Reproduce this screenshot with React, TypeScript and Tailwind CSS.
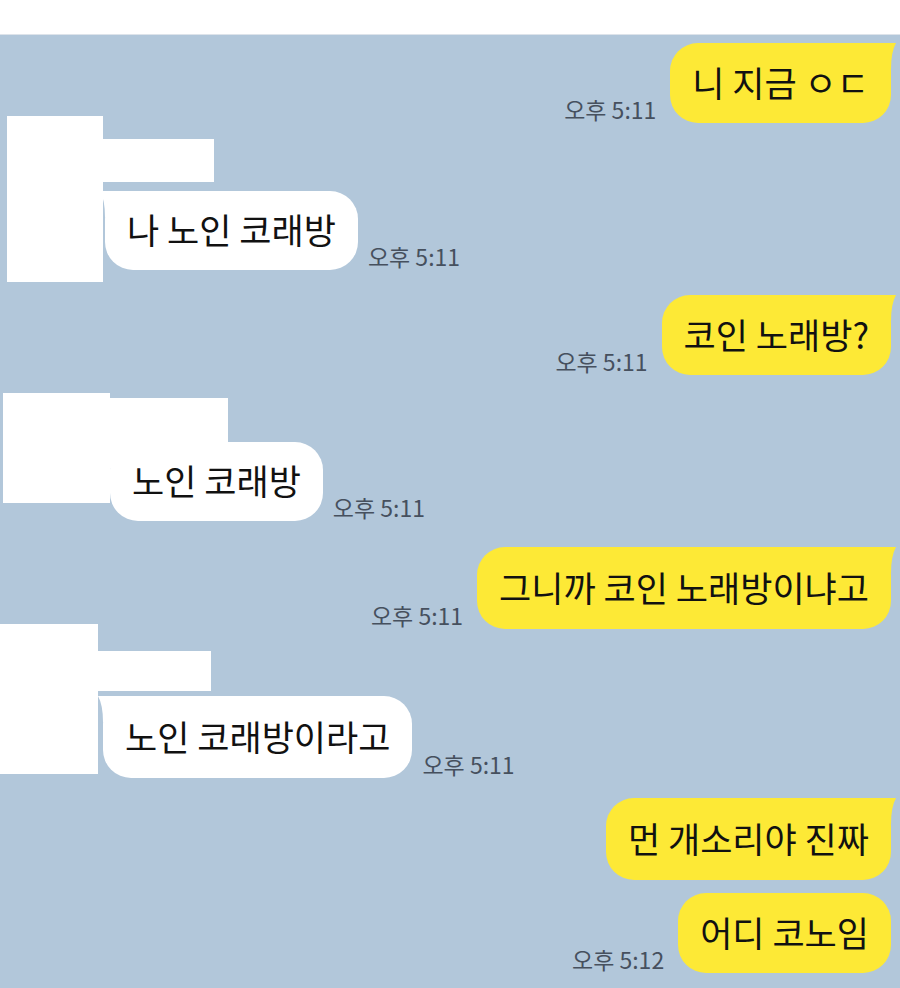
import React from "react";

const YellowTail = () => (
  <svg
    className="absolute -right-[5px] top-0"
    width="34"
    height="26"
    viewBox="0 0 34 26"
  >
    <path d="M34 0 L0 0 L0 26 L29 26 Q29 9 34 0 Z" fill="#fde936" />
  </svg>
);

const WhiteTail = () => (
  <svg
    className="absolute -left-[5px] top-0"
    width="34"
    height="26"
    viewBox="0 0 34 26"
  >
    <path d="M0 0 L34 0 L34 26 L5 26 Q5 9 0 0 Z" fill="#ffffff" />
  </svg>
);

const Time = ({ value, className }: { value: string; className: string }) => (
  <span className={`text-[23px] leading-[26px] text-[#46505e] whitespace-nowrap ${className}`}>
    {value}
  </span>
);

const MyBubble: React.FC<{
  text: string;
  time?: string;
  tail?: boolean;
  className: string;
  height: string;
}> = ({ text, time, tail = true, className, height }) => (
  <div className={`flex items-end justify-end pr-[9px] ${className}`}>
    {time && <Time value={time} className="mr-[14px] mb-[1px]" />}
    <div
      className={`relative flex items-center rounded-[28px] bg-[#fde936] px-[22px] pb-[2px] text-[35px] text-[#111111] whitespace-nowrap ${height}`}
    >
      {tail && <YellowTail />}
      <span className="relative">{text}</span>
    </div>
  </div>
);

const TheirBubble: React.FC<{ text: string; time: string; height: string }> = ({
  text,
  time,
  height,
}) => (
  <div className="flex items-end">
    <div
      className={`relative flex items-center rounded-[28px] bg-white px-[22px] pb-[2px] text-[35px] text-[#111111] whitespace-nowrap ${height}`}
    >
      <WhiteTail />
      <span className="relative">{text}</span>
    </div>
    <Time value={time} className="ml-[10px] mb-[1px]" />
  </div>
);

const App: React.FC = () => {
  return (
    <div className="w-[900px] h-[988px] overflow-hidden bg-white font-['Noto_Sans_CJK_KR',sans-serif]">
      <div className="h-[35px] border-b border-[#dde3ea] bg-white" />
      <div className="flex h-[953px] flex-col bg-[#b2c7da]">
        <MyBubble text="니 지금 ㅇㄷ" time="오후 5:11" className="mt-[8px]" height="h-[80px]" />

        <div className="-mt-[7px] flex items-start">
          <div className="ml-[7px] h-[166px] w-[96px] bg-white" />
          <div className="flex flex-col pt-[23px]">
            <div className="h-[43px] w-[111px] bg-white" />
            <div className="mt-[9px] ml-[2px]">
              <TheirBubble text="나 노인 코래방" time="오후 5:11" height="h-[79px]" />
            </div>
          </div>
        </div>

        <MyBubble text="코인 노래방?" time="오후 5:11" className="mt-[13px]" height="h-[80px]" />

        <div className="mt-[18px] flex items-start">
          <div className="ml-[3px] h-[110px] w-[107px] bg-white" />
          <div className="flex flex-col pt-[5px]">
            <div className="h-[44px] w-[118px] bg-white" />
            <div>
              <TheirBubble text="노인 코래방" time="오후 5:11" height="h-[79px]" />
            </div>
          </div>
        </div>

        <MyBubble
          text="그니까 코인 노래방이냐고"
          time="오후 5:11"
          className="mt-[26px]"
          height="h-[82px]"
        />

        <div className="-mt-[5px] flex items-start">
          <div className="h-[150px] w-[98px] bg-white" />
          <div className="flex flex-col pt-[27px]">
            <div className="h-[40px] w-[113px] bg-white" />
            <div className="mt-[5px] ml-[5px]">
              <TheirBubble text="노인 코래방이라고" time="오후 5:11" height="h-[82px]" />
            </div>
          </div>
        </div>

        <MyBubble text="먼 개소리야 진짜" className="mt-[20px]" height="h-[82px]" />
        <MyBubble
          text="어디 코노임"
          time="오후 5:12"
          tail={false}
          className="mt-[13px]"
          height="h-[80px]"
        />
      </div>
    </div>
  );
};

export default App;
